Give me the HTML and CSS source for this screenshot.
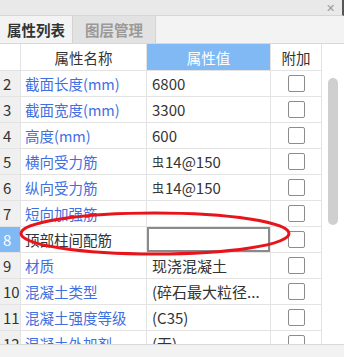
FILE: index.html
```html
<!DOCTYPE html>
<html>
  <head>
    <title>属性列表</title>
    <link rel="stylesheet" href="styles.css">
  </head>
  <body>
    <div class="panel">
      <div class="titlebar">
        <span class="close">✕</span>
      </div>
      <div class="tabs">
        <div class="tab active">属性列表</div>
        <div class="tab">图层管理</div>
      </div>
      <div class="body">
        <div class="grid">
          <div class="hd num"></div>
          <div class="hd">属性名称</div>
          <div class="hd sel">属性值</div>
          <div class="hd">附加</div>

          <div class="num">2</div><div class="name">截面长度(mm)</div><div class="val">6800</div><div class="chk"><span class="box"></span></div>
          <div class="num">3</div><div class="name">截面宽度(mm)</div><div class="val">3300</div><div class="chk"><span class="box"></span></div>
          <div class="num">4</div><div class="name">高度(mm)</div><div class="val">600</div><div class="chk"><span class="box"></span></div>
          <div class="num">5</div><div class="name">横向受力筋</div><div class="val"><span class="bar">虫</span>14@150</div><div class="chk"><span class="box"></span></div>
          <div class="num">6</div><div class="name">纵向受力筋</div><div class="val"><span class="bar">虫</span>14@150</div><div class="chk"><span class="box"></span></div>
          <div class="num">7</div><div class="name">短向加强筋</div><div class="val"></div><div class="chk"><span class="box"></span></div>
          <div class="num cur">8</div><div class="name plain">顶部柱间配筋</div><div class="val"><span class="edit"></span></div><div class="chk"><span class="box"></span></div>
          <div class="num">9</div><div class="name">材质</div><div class="val">现浇混凝土</div><div class="chk"><span class="box"></span></div>
          <div class="num">10</div><div class="name">混凝土类型</div><div class="val">(碎石最大粒径...</div><div class="chk"><span class="box"></span></div>
          <div class="num">11</div><div class="name">混凝土强度等级</div><div class="val">(C35)</div><div class="chk"><span class="box"></span></div>
          <div class="num">12</div><div class="name">混凝土外加剂</div><div class="val">(无)</div><div class="chk"><span class="box"></span></div>
        </div>
        <div class="scroll"><span class="thumb"></span></div>
      </div>
      <div class="footer"></div>

      <!-- red hand-drawn mark over rows 7-8 -->
      <svg class="mark" width="344" height="357" viewBox="0 0 344 357">
        <ellipse cx="155" cy="233.5" rx="134" ry="20.5" fill="none" stroke="#e8141b" stroke-width="3"/>
      </svg>
    </div>
  </body>
</html>
```

FILE: styles.css
```css
body { margin: 0; font-family: "Noto Sans CJK SC", "Noto Sans", sans-serif; font-size: 14.5px; color: #333; }

.panel { position: relative; width: 344px; height: 357px; overflow: hidden; background: #f2f2f2; }

.titlebar { height: 15px; background: #e9e9e9; border-bottom: 1px solid #d6d6d6; border-right: 2px solid #555; display: flex; justify-content: flex-end; align-items: center; }
.close { color: #9a9a9a; font-size: 11px; margin-right: 7px; line-height: 1; }

.tabs { display: flex; height: 27px; background: #f3f3f3; border-bottom: 1px solid #d8d8d8; }
.tab { width: 82px; display: flex; align-items: center; justify-content: center; background: #e2e2e2; color: #9a9a9a; font-weight: bold; border-right: 1px solid #d4d4d4; }
.tab.active { width: 72px; background: #f3f3f3; color: #333; }

.body { display: flex; height: 300px; background: #fff; border-bottom: 1px solid #d8d8d8; overflow: hidden; }

.grid { display: grid; grid-template-columns: 21px 126px 124px 51px; grid-auto-rows: 26px; grid-template-rows: 27px; align-content: start; }
.grid > div { border-right: 1px solid #e3e3e3; border-bottom: 1px solid #e3e3e3; display: flex; align-items: center; white-space: nowrap; overflow: hidden; }

.hd { justify-content: center; background: #fff; }
.hd.sel { background: #80b9f4; color: #fff; }

.num { background: #f0f0f0; padding-left: 3px; font-size: 15px; }
.hd.num { background: #fff; }
.num.cur { background: #80b9f4; color: #fff; }

.name { color: #3f6fe0; padding-left: 4px; }
.name.plain { color: #333; }

.val { padding-left: 5px; font-size: 15px; }
.bar { font-size: 12px; margin-right: 1px; }
.edit { display: block; width: 119px; height: 21px; border: 2px solid #8a8a8a; background: #fff; margin-left: -5px; }

.chk { justify-content: center; }
.box { width: 15px; height: 15px; border: 1px solid #8c8c8c; border-radius: 2px; background: #fff; }

.scroll { width: 22px; position: relative; background: #fff; }
.thumb { position: absolute; left: 6px; top: 34px; width: 10px; height: 147px; border-radius: 5px; background: #cfcfcf; }

.footer { height: 13px; background: #f2f2f2; }

.mark { position: absolute; left: 0; top: 0; pointer-events: none; }
```
